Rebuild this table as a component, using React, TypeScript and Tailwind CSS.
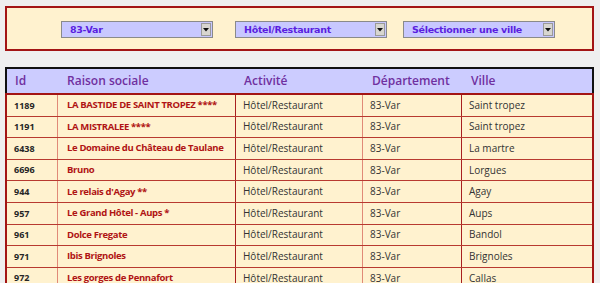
const rows = [
  { id: "1189", name: "LA BASTIDE DE SAINT TROPEZ ****", ville: "Saint tropez" },
  { id: "1191", name: "LA MISTRALEE ****", ville: "Saint tropez" },
  { id: "6438", name: "Le Domaine du Château de Taulane", ville: "La martre" },
  { id: "6696", name: "Bruno", ville: "Lorgues" },
  { id: "944", name: "Le relais d'Agay **", ville: "Agay" },
  { id: "957", name: "Le Grand Hôtel - Aups *", ville: "Aups" },
  { id: "961", name: "Dolce Fregate", ville: "Bandol" },
  { id: "971", name: "Ibis Brignoles", ville: "Brignoles" },
  { id: "972", name: "Les gorges de Pennafort", ville: "Callas" },
];

function Select({ label }: { label: string }) {
  return (
    <div className="flex h-[17px] w-[152px] border border-[#8a8a8a] bg-[#c8c8ff]">
      <span className="flex-1 pl-2 text-[9.5px] leading-[15px] font-bold whitespace-nowrap text-[#5a1ee0] [font-family:'DejaVu_Sans',sans-serif] tracking-[-0.3px]">
        {label}
      </span>
      <span className="m-[1px] flex w-[10px] items-center justify-center border border-[#9a9a9a] bg-[#d8d6d0]">
        <svg width="6" height="4" viewBox="0 0 6 4">
          <path d="M0 0h6L3 3.5z" fill="#111" />
        </svg>
      </span>
    </div>
  );
}

export default function App() {
  return (
    <div className="h-[283px] w-[600px] overflow-hidden bg-[#efefef] pt-[6px] pl-[5px] [font-family:'Open_Sans',sans-serif]">
      <div className="flex h-[45px] w-[589px] items-center gap-[22px] border-2 border-[#a31515] bg-[#fff2cf] pl-[54px] pt-[2px]">
        <Select label="83-Var" />
        <Select label="Hôtel/Restaurant" />
        <div className="-ml-[6px]">
          <Select label="Sélectionner une ville" />
        </div>
      </div>

      <div className="mt-[16px] w-[589px] border-l-2 border-r-2 border-t-2 border-l-[#111] border-r-[#111] border-t-[#111]">
        <div className="flex h-[24px] items-center bg-[#ccccff] text-[12px] font-semibold text-[#7030a0]">
          <span className="w-[53px] pl-[8px]">Id</span>
          <span className="w-[178px] pl-[7px]">Raison sociale</span>
          <span className="w-[127px] pl-[6px]">Activité</span>
          <span className="w-[99px] pl-[7px]">Département</span>
          <span className="flex-1 pl-[7px]">Ville</span>
        </div>
      </div>
      <div className="w-[589px] border-x-2 border-t-2 border-[#a31515] bg-[#fff2cf]">
        {rows.map((r) => (
          <div
            key={r.id}
            className="flex h-[21.6px] items-center border-b border-[#b83a30] text-[10px] whitespace-nowrap"
          >
            <span className="flex h-full w-[51px] items-center border-r border-[#e08a78] pl-[7px] text-[9px] font-bold text-[#262626]">
              {r.id}
            </span>
            <span className="flex h-full w-[178px] items-center border-r border-[#a82020] pl-[9px] text-[9.5px] font-bold tracking-[-0.35px] text-[#b01414]">
              {r.name}
            </span>
            <span className="flex h-full w-[127px] items-center border-r border-[#e08a78] pl-[7px] text-[#333]">
              Hôtel/Restaurant
            </span>
            <span className="flex h-full w-[99px] items-center border-r border-[#a82020] pl-[7px] text-[#333]">
              83-Var
            </span>
            <span className="flex h-full flex-1 items-center pl-[7px] text-[#333]">
              {r.ville}
            </span>
          </div>
        ))}
      </div>
    </div>
  );
}
